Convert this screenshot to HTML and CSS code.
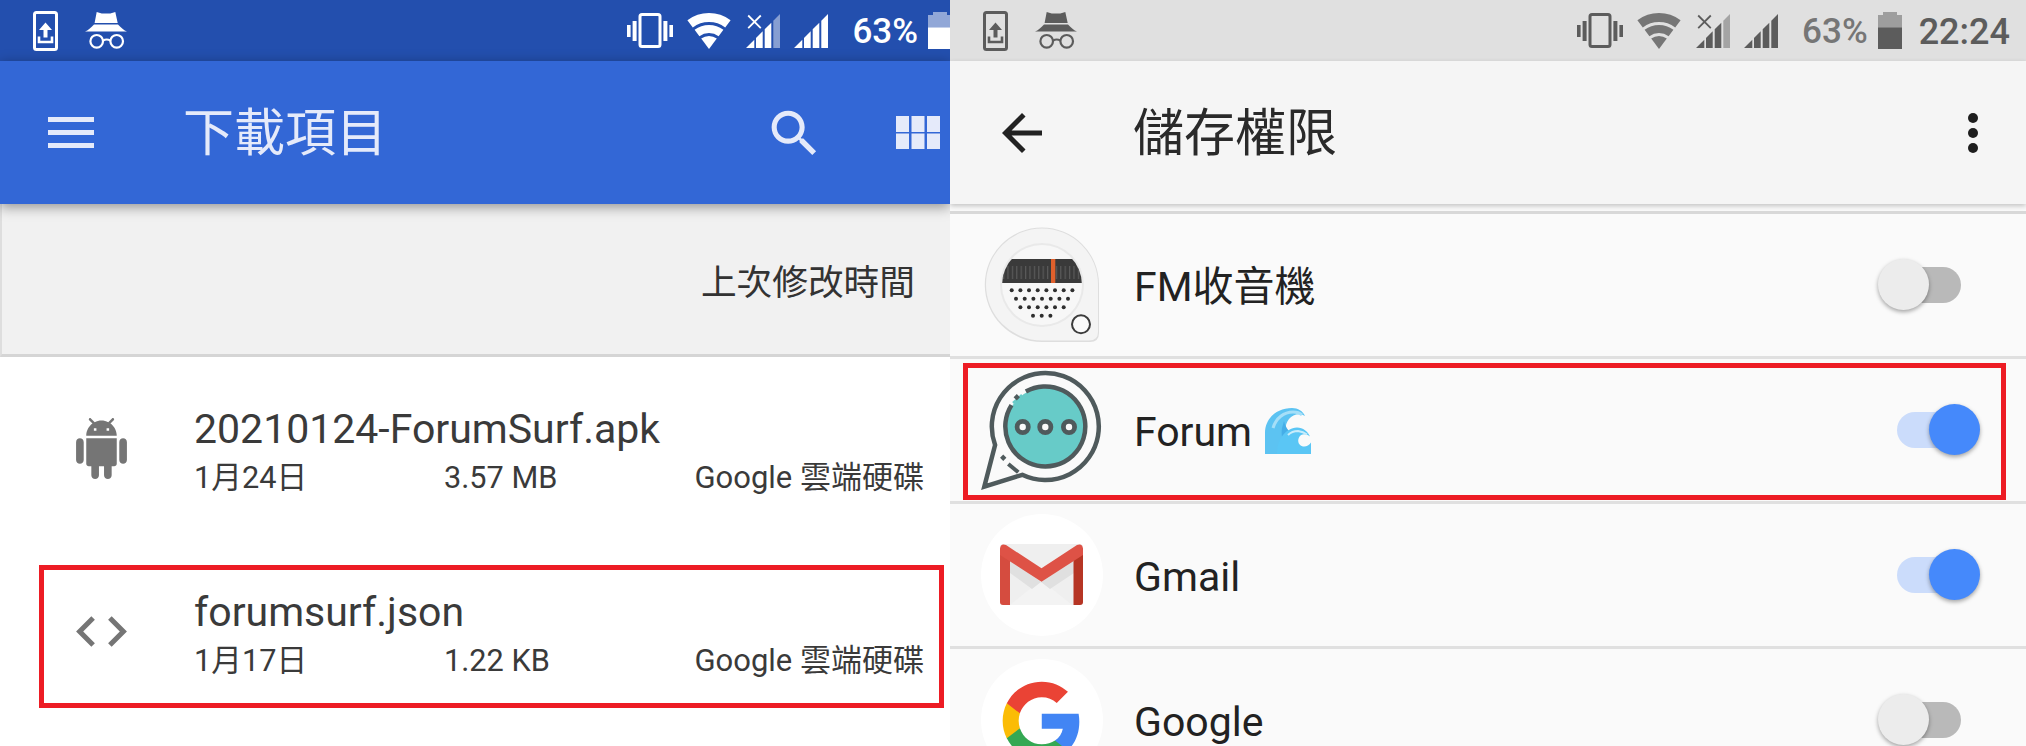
FILE: index.html
```html
<!DOCTYPE html>
<html lang="zh-Hant">
<head>
<meta charset="utf-8">
<title>下載項目 / 儲存權限</title>
<link rel="stylesheet" href="styles.css">
</head>
<body>
<svg class="sprite" aria-hidden="true">
  <symbol id="i-upload" viewBox="0 0 25 40">
    <rect x="1.5" y="1.5" width="22" height="37" rx="2" fill="none" stroke="currentColor" stroke-width="3"/>
    <path d="M12.5 11.5l6.500 7.500h-4.500v7.500h-4V19H6z" fill="currentColor"/>
    <path d="M6 25.5V31h13v-5.500" fill="none" stroke="currentColor" stroke-width="2.6"/>
  </symbol>
  <symbol id="i-incognito" viewBox="0 0 42 37">
    <path d="M11.700 0l5 1.600h8.600l5-1.600 2.400 11H9.600z" fill="currentColor"/>
    <path d="M0 19.500c3-1 6-4 9-7h24c3 3 6 6 9 7z" fill="currentColor"/>
    <circle cx="11.700" cy="29.300" r="6.300" fill="none" stroke="currentColor" stroke-width="2.2"/>
    <circle cx="31.700" cy="29.300" r="6.300" fill="none" stroke="currentColor" stroke-width="2.2"/>
    <path d="M18 28.500q3.700-2 7.400 0" fill="none" stroke="currentColor" stroke-width="2"/>
  </symbol>
  <symbol id="i-vibrate" viewBox="0 0 46 35">
    <path d="M0 12h3.600v12H0zM5.600 8h4v20h-4zM36.400 8h4v20h-4zM42.400 12H46v12h-3.600z" fill="currentColor"/>
    <rect x="13" y="1.5" width="20" height="32" rx="2" fill="none" stroke="currentColor" stroke-width="3"/>
  </symbol>
  <symbol id="i-wifi" viewBox="0 0 44 36">
    <path d="M.4 7.200A36 36 0 0 1 43.600 7.200L38.200 14.400A27 27 0 0 0 5.800 14.400z" fill="currentColor"/>
    <path d="M7.600 16.800A24 24 0 0 1 36.400 16.800L31.600 23.200A16 16 0 0 0 12.400 23.200z" fill="currentColor"/>
    <path d="M14.200 25.600A13 13 0 0 1 29.800 25.600L22 36z" fill="currentColor"/>
  </symbol>
  <symbol id="i-signal-x" viewBox="0 0 34 34">
    <path d="M0 34l8.300-8.300V34zM10 24l6.700-6.700V34H10zM18.700 15.300l6.600-6.600V34h-6.600z" fill="currentColor"/>
    <path d="M27.300 6.700L34 0v34h-6.700z" fill="currentColor" opacity=".45"/>
    <path d="M2.200 1.500l12.600 12.600M14.800 1.500L2.200 14.100" stroke="currentColor" stroke-width="1.8"/>
  </symbol>
  <symbol id="i-signal" viewBox="0 0 34 34">
    <path d="M0 34l8.300-8.300V34zM10 24l6.700-6.700V34H10zM18.700 15.300l6.600-6.600V34h-6.600zM27.300 6.700L34 0v34h-6.700z" fill="currentColor"/>
  </symbol>
  <symbol id="i-battery" viewBox="0 0 24 37">
    <path d="M5 3V0h14v3h5v12.300H0V3z" fill="currentColor" opacity=".5"/>
    <path d="M0 15.300h24V37H0z" fill="currentColor"/>
  </symbol>
</svg>

<main class="screen">
  <section class="pane pane-files">
    <div class="status status-blue">
      <svg class="si si-upload"><use href="#i-upload"/></svg>
      <svg class="si si-incognito"><use href="#i-incognito"/></svg>
      <span class="status-spacer"></span>
      <svg class="si si-vibrate"><use href="#i-vibrate"/></svg>
      <svg class="si si-wifi"><use href="#i-wifi"/></svg>
      <svg class="si si-signal-x"><use href="#i-signal-x"/></svg>
      <svg class="si si-signal"><use href="#i-signal"/></svg>
      <span class="pct">63%</span>
      <svg class="si si-battery"><use href="#i-battery"/></svg>
    </div>
    <header class="bar bar-blue">
      <svg class="menu-icon" viewBox="0 0 46 31"><path d="M0 0h46v5H0zM0 13h46v5H0zM0 26h46v5H0z" fill="currentColor"/></svg>
      <h1 class="bar-title">下載項目</h1>
      <svg class="search-icon" viewBox="0 0 24 24"><path d="M15.500 14h-.79l-.28-.27C15.410 12.590 16 11.110 16 9.500 16 5.910 13.090 3 9.500 3S3 5.910 3 9.500 5.910 16 9.500 16c1.610 0 3.090-.59 4.230-1.570l.27.28v.79l5 4.990L20.490 19l-4.990-5zm-6 0C7.010 14 5 11.990 5 9.500S7.010 5 9.500 5 14 7.010 14 9.500 11.990 14 9.500 14z" fill="currentColor"/></svg>
      <svg class="grid-icon" viewBox="0 0 44 33"><path d="M0 0h13v16H0zM15.500 0h13v16h-13zM31 0h13v16H31zM0 17.500h13V33H0zM15.500 17.500h13V33h-13zM31 17.500h13V33H31z" fill="currentColor"/></svg>
    </header>
    <div class="sortbar">上次修改時間</div>
    <ul class="files">
      <li class="file">
        <svg class="file-icon" viewBox="0 0 24 24"><path d="M6 18c0 .55.45 1 1 1h1v3.500c0 .83.67 1.500 1.500 1.500s1.500-.67 1.500-1.500V19h2v3.500c0 .83.67 1.500 1.500 1.500s1.500-.67 1.500-1.500V19h1c.55 0 1-.45 1-1V8H6v10zM3.500 8C2.670 8 2 8.670 2 9.500v7c0 .83.67 1.500 1.500 1.500S5 17.330 5 16.500v-7C5 8.670 4.330 8 3.500 8zm17 0c-.83 0-1.500.67-1.500 1.500v7c0 .83.67 1.500 1.500 1.500s1.500-.67 1.500-1.500v-7c0-.83-.67-1.500-1.500-1.500zm-4.970-5.840l1.300-1.300c.2-.2.2-.51 0-.71-.2-.2-.51-.2-.71 0l-1.480 1.480C13.850 1.230 12.950 1 12 1c-.96 0-1.860.23-2.660.63L7.850.15c-.2-.2-.51-.2-.71 0-.2.2-.2.51 0 .71l1.310 1.310C6.970 3.260 6 5.010 6 7h12c0-1.990-.97-3.750-2.470-4.840zM10 5H9V4h1v1zm5 0h-1V4h1v1z" fill="currentColor"/></svg>
        <div class="file-text">
          <div class="file-name">20210124-ForumSurf.apk</div>
          <div class="file-meta"><span>1月24日</span><span>3.57 MB</span><span class="file-source">Google 雲端硬碟</span></div>
        </div>
      </li>
      <li class="file">
        <svg class="file-icon" viewBox="0 0 24 24"><path d="M9.400 16.600L4.800 12l4.600-4.600L8 6l-6 6 6 6 1.400-1.400zm5.200 0l4.600-4.600-4.600-4.600L16 6l6 6-6 6-1.400-1.400z" fill="currentColor"/></svg>
        <div class="file-text">
          <div class="file-name">forumsurf.json</div>
          <div class="file-meta"><span>1月17日</span><span>1.22 KB</span><span class="file-source">Google 雲端硬碟</span></div>
        </div>
      </li>
    </ul>
    <div class="mark mark-file"></div>
  </section>

  <section class="pane pane-perms">
    <div class="status status-grey">
      <svg class="si si-upload"><use href="#i-upload"/></svg>
      <svg class="si si-incognito"><use href="#i-incognito"/></svg>
      <span class="status-spacer"></span>
      <svg class="si si-vibrate"><use href="#i-vibrate"/></svg>
      <svg class="si si-wifi"><use href="#i-wifi"/></svg>
      <svg class="si si-signal-x"><use href="#i-signal-x"/></svg>
      <svg class="si si-signal"><use href="#i-signal"/></svg>
      <span class="pct">63%</span>
      <svg class="si si-battery"><use href="#i-battery"/></svg>
      <span class="clock">22:24</span>
    </div>
    <header class="bar bar-light">
      <svg class="back-icon" viewBox="0 0 24 24"><path d="M20 11H7.830l5.590-5.590L12 4l-8 8 8 8 1.410-1.410L7.830 13H20v-2z" fill="currentColor"/></svg>
      <h1 class="bar-title">儲存權限</h1>
      <div class="more" aria-hidden="true"><i></i><i></i><i></i></div>
    </header>
    <div class="bar-rule"></div>
    <ul class="apps">
      <li class="app">
        <svg class="app-icon" viewBox="0 0 122 122">
          <defs>
            <clipPath id="dial"><circle cx="61" cy="61" r="40"/></clipPath>
            <pattern id="ticks" width="4.400" height="10" patternUnits="userSpaceOnUse"><rect width="1.200" height="10" fill="#5a5a5a"/></pattern>
          </defs>
          <path d="M61 3.500A57 57 0 0 1 118 60.500V109Q118 118 109 118H61A57 57 0 0 1 61 3.500z" fill="#dedede"/>
          <path d="M61 4.500A56 56 0 0 1 117 60.500V108Q117 116.500 108 116.500H61A56 56 0 0 1 61 4.500z" fill="#f4f4f4"/>
          <circle cx="61" cy="61" r="42" fill="#e9e9e9"/>
          <g clip-path="url(#dial)">
            <rect x="20" y="20" width="82" height="82" fill="#f7f7f7"/>
            <rect x="20" y="35" width="82" height="24" fill="#3a3a3a"/>
            <rect x="20" y="42" width="82" height="13" fill="url(#ticks)"/>
            <rect x="70" y="35" width="4.300" height="24" fill="#e0602c"/>
          </g>
          <g fill="#2e2e2e">
            <circle cx="30.700" cy="66.300" r="2"/><circle cx="39.400" cy="66.300" r="2"/><circle cx="48" cy="66.300" r="2"/><circle cx="56.700" cy="66.300" r="2"/><circle cx="65.400" cy="66.300" r="2"/><circle cx="74" cy="66.300" r="2"/><circle cx="82.700" cy="66.300" r="2"/><circle cx="91.400" cy="66.300" r="2"/>
            <circle cx="35" cy="74.700" r="2"/><circle cx="43.700" cy="74.700" r="2"/><circle cx="52.400" cy="74.700" r="2"/><circle cx="61" cy="74.700" r="2"/><circle cx="69.700" cy="74.700" r="2"/><circle cx="78.400" cy="74.700" r="2"/><circle cx="87" cy="74.700" r="2"/>
            <circle cx="39.400" cy="83.300" r="2"/><circle cx="48" cy="83.300" r="2"/><circle cx="56.700" cy="83.300" r="2"/><circle cx="65.400" cy="83.300" r="2"/><circle cx="74" cy="83.300" r="2"/><circle cx="82.700" cy="83.300" r="2"/>
            <circle cx="52" cy="91.700" r="2"/><circle cx="60.700" cy="91.700" r="2"/><circle cx="69.400" cy="91.700" r="2"/>
          </g>
          <circle cx="100" cy="100.300" r="9" fill="#fafafa" stroke="#3c3c3c" stroke-width="2"/>
        </svg>
        <span class="app-name">FM收音機</span>
        <div class="switch"><span class="thumb"></span></div>
      </li>
      <li class="app">
        <svg class="app-icon" viewBox="0 0 122 122">
          <circle cx="64.300" cy="57.500" r="39" fill="#67cbc8"/>
          <path d="M14.100 76L3.300 117.700 41.250 105.800A53.500 53.500 0 1 0 14.100 76z" fill="none" stroke="#4f5a5c" stroke-width="4.500"/>
          <path d="M44.900 22.500A40 40 0 1 1 30.500 36.100" fill="none" stroke="#4f5a5c" stroke-width="4.500"/>
          <path d="M32 34l9-8" stroke="#67cbc8" stroke-width="2.500"/>
          <path d="M27.300 95l10 8.300" stroke="#4f5a5c" stroke-width="4"/>
          <rect x="33.500" y="26" width="4.500" height="4.500" fill="#4f5a5c" transform="rotate(45 35.700 28.300)"/>
          <rect x="20" y="86.500" width="4.500" height="4.500" fill="#4f5a5c" transform="rotate(45 22.300 88.700)"/>
          <g fill="#fafafa" stroke="#4f5a5c" stroke-width="4.800">
            <circle cx="41.700" cy="58" r="5.600"/><circle cx="64.300" cy="58" r="5.600"/><circle cx="88" cy="58" r="5.600"/>
          </g>
        </svg>
        <span class="app-name">Forum</span>
        <svg class="wave" viewBox="0 0 46 46">
          <path d="M0 46V25C0 10 12 0 27 0c6 0 11 3 13 8-5-3-12-2-16 3-5 6-4 15-1 20l22 15z" fill="#5cc3f2"/>
          <path d="M17 20c-1 6 0 13 4 18l6-12c-4-3-7-8-8-13z" fill="#45aee8"/>
          <path d="M12 46C12 32 20 20 32 19.500c6 0 11 4 13 9-4-3-9-3-11 1-2 4 0 8 4 9 3 .5 6-1 8-4V46z" fill="#5ac6f5"/>
          <path d="M8 20C11 10 19 4 28 4c4 0 7 1 9 3" fill="none" stroke="#a5dff8" stroke-width="3"/>
          <path d="M23 27c3-3 7-4 10-4 4 .5 7 2 9 3.500" fill="none" stroke="#c8ecfb" stroke-width="2"/>
        </svg>
        <div class="switch switch-on"><span class="thumb"></span></div>
      </li>
      <li class="app">
        <svg class="app-icon" viewBox="0 0 122 122">
          <circle cx="61" cy="61" r="61" fill="#fff"/>
          <rect x="19" y="30" width="83" height="61" rx="3" fill="#efefef"/>
          <path d="M29 91l31-25 31 25z" fill="#f3f3f3"/>
          <path d="M29 44l31 24-9 7-22-16zM93 44L60 68l9 7 24-16z" fill="#e0e0e0"/>
          <path d="M19 34V88q0 3 3 3h7V40z" fill="#d54c3f"/>
          <path d="M102 34V88q0 3-3 3h-6.500V40z" fill="#b63524"/>
          <path d="M19 36Q19 29 25 31L60.500 54.300 96 31Q102 29 102 36V41L60.500 67.700 19 41z" fill="#de5246"/>
        </svg>
        <span class="app-name">Gmail</span>
        <div class="switch switch-on"><span class="thumb"></span></div>
      </li>
      <li class="app">
        <svg class="app-icon" viewBox="0 0 122 122">
          <circle cx="61" cy="61" r="61" fill="#fff"/>
          <g transform="translate(18.100 19.100) scale(1.778)">
            <path d="M45.120 24.500c0-1.560-.14-3.060-.4-4.500H24v8.510h11.840c-.51 2.750-2.060 5.080-4.390 6.640v5.520h7.110c4.160-3.830 6.560-9.470 6.560-16.170z" fill="#4285f4"/>
            <path d="M24 46c5.940 0 10.920-1.970 14.560-5.330l-7.110-5.520c-1.970 1.320-4.490 2.100-7.450 2.100-5.730 0-10.580-3.870-12.310-9.070H4.340v5.700C7.960 41.070 15.400 46 24 46z" fill="#34a853"/>
            <path d="M11.690 28.180C11.250 26.860 11 25.450 11 24s.25-2.860.69-4.180v-5.700H4.340C2.850 17.090 2 20.450 2 24c0 3.550.85 6.910 2.340 9.880l7.350-5.700z" fill="#fbbc05"/>
            <path d="M24 10.750c3.230 0 6.130 1.110 8.410 3.290l6.310-6.310C34.910 4.180 29.930 2 24 2 15.400 2 7.960 6.930 4.340 14.120l7.350 5.700c1.730-5.200 6.580-9.070 12.310-9.070z" fill="#ea4335"/>
          </g>
        </svg>
        <span class="app-name">Google</span>
        <div class="switch"><span class="thumb"></span></div>
      </li>
    </ul>
    <div class="mark mark-app"></div>
  </section>
</main>
</body>
</html>
```

FILE: styles.css
```css
* { box-sizing: border-box; }
html, body { margin: 0; padding: 0; height: 746px; overflow: hidden; background: #fff; }
body { font-family: Roboto, "Noto Sans CJK TC", sans-serif; }
.sprite { display: none; }
ul { list-style: none; margin: 0; padding: 0; }
h1 { margin: 0; font-weight: 400; }

.screen { display: flex; width: 2026px; height: 746px; }
.pane { position: relative; height: 746px; overflow: hidden; }
.pane-files { width: 950px; background: #fff; }
.pane-perms { width: 1076px; background: #fafafa; }

/* status bar */
.status { display: flex; align-items: center; width: 1076px; height: 61px; padding: 0 16px 0 33px; }
.status-blue { background: #234fae; color: #fff; padding-right: 124px; }
.status-grey { background: #e0e0e0; color: #5c5c5c; }
.si { display: block; flex: none; }
.si-upload { width: 25px; height: 40px; }
.si-incognito { width: 42px; height: 37px; margin-left: 27px; }
.status-spacer { flex: 1; }
.si-vibrate { width: 46px; height: 35px; }
.si-wifi { width: 44px; height: 36px; margin-left: 14px; }
.si-signal-x { width: 34px; height: 34px; margin-left: 15px; margin-top: 1px; }
.si-signal { width: 34px; height: 34px; margin-left: 14px; margin-top: 1px; }
.pct { margin-left: 24px; padding-top: 3px; font-size: 35px; font-weight: 500; line-height: 42px; }
.si-battery { width: 24px; height: 37px; margin-left: 10px; }
.clock { margin-left: 17px; padding-top: 3px; font-size: 36px; font-weight: 500; line-height: 42px; }
.status-grey .si-wifi, .status-grey .pct { color: #767676; }

/* app bars */
.bar { position: relative; z-index: 2; display: flex; align-items: center; height: 143px; }
.bar-blue { background: #3367d6; color: #e5eafa; padding-left: 48px; box-shadow: 0 3px 12px rgba(0,0,0,.4); }
.bar-light { background: #f5f5f5; color: #222; padding-left: 42px; box-shadow: 0 2px 5px rgba(0,0,0,.22); }
.bar-title { font-size: 51px; line-height: 60px; padding-top: 3px; }
.bar-blue .bar-title { margin-left: 89px; flex: 1; color: #e5eafa; }
.bar-light .bar-title { margin-left: 81px; flex: 1; color: #2a2a2a; }
.menu-icon { width: 46px; height: 31px; flex: none; }
.search-icon { width: 61px; height: 61px; flex: none; margin-top: 1px; }
.grid-icon { width: 44px; height: 33px; flex: none; margin-left: 71px; margin-right: 10px; }
.back-icon { width: 60px; height: 60px; flex: none; margin-top: 1px; }
.more { display: flex; flex-direction: column; gap: 5px; margin-right: 48px; }
.more i { display: block; width: 10px; height: 10px; border-radius: 50%; background: #1e1e1e; }
.bar-rule { height: 3px; margin-top: 7px; background: #d8d8d8; }

/* sort bar */
.sortbar { height: 153px; padding: 4px 35px 0 0; text-align: right; font-size: 35.7px; line-height: 150px; color: #333; background: #f1f1f1; border-left: 2px solid #dedede; border-bottom: 3px solid #d5d5d5; }

/* file list */
.file { display: flex; align-items: center; height: 183px; padding: 0 26px 0 71px; }
.file-icon { width: 61px; height: 61px; flex: none; color: #757575; }
.file-text { flex: 1; margin-left: 62px; padding-top: 8px; color: #3a3a3a; }
.file-name { font-size: 41px; line-height: 48px; }
.file-meta { display: grid; grid-template-columns: 250px 1fr auto; margin-top: 3px; font-size: 30.7px; line-height: 44px; }
.file-source { font-size: 31px; }

/* app list */
.app { display: flex; align-items: center; height: 145px; padding: 0 65px 0 31px; border-bottom: 3px solid #e0e0e0; }
.app-icon { display: block; width: 122px; height: 122px; flex: none; }
.app-name { margin-left: 31px; padding-top: 4px; font-size: 41px; line-height: 50px; color: #222; }
.wave { width: 46px; height: 46px; flex: none; margin-left: 13px; margin-top: 2px; }

/* switch */
.switch { position: relative; width: 64px; height: 36px; margin-left: auto; border-radius: 18px; background: #b9b9b9; }
.thumb { position: absolute; top: -8px; left: -19px; width: 51px; height: 51px; border-radius: 50%; background: #ececec; box-shadow: 0 2px 4px rgba(0,0,0,.35); }
.switch-on { background: #cbdcfb; }
.switch-on .thumb { left: 32px; background: #4589fb; }

/* red call-out frames */
.mark { position: absolute; border: 5px solid #ed1c24; }
.mark-file { left: 39px; top: 565px; width: 905px; height: 143px; }
.mark-app { left: 13px; top: 363px; width: 1043px; height: 137px; }
```
